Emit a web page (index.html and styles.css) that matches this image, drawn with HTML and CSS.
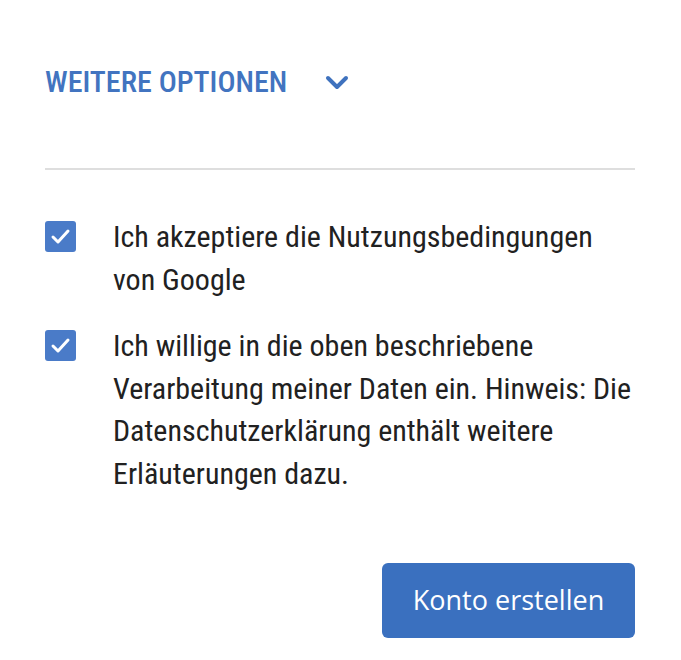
FILE: index.html
```html
<!DOCTYPE html>
<html lang="de">
<head>
<meta charset="UTF-8" />
<meta name="viewport" content="width=device-width, initial-scale=1" />
<title>Konto erstellen</title>
<link rel="stylesheet" href="styles.css">
</head>
<body>

<div class="panel">
  <div class="more">
    <span class="more-label">WEITERE OPTIONEN</span>
    <svg class="chevron" width="24" height="16" viewBox="0 0 24 16" aria-hidden="true">
      <path d="M3 3 L12 12 L21 3" fill="none" stroke="#3f72be" stroke-width="4" stroke-linecap="round" stroke-linejoin="round" />
    </svg>
  </div>

  <hr class="divider" />

  <div class="consent">
    <label class="check-row">
      <span class="box">
        <svg width="31" height="31" viewBox="0 0 31 31" aria-hidden="true">
          <path d="M8 16 L13 21 L23 10" fill="none" stroke="#fff" stroke-width="3" stroke-linecap="round" stroke-linejoin="round" />
        </svg>
      </span>
      <span class="check-text">Ich akzeptiere die Nutzungsbedingungen<br>von Google</span>
    </label>

    <label class="check-row">
      <span class="box">
        <svg width="31" height="31" viewBox="0 0 31 31" aria-hidden="true">
          <path d="M8 16 L13 21 L23 10" fill="none" stroke="#fff" stroke-width="3" stroke-linecap="round" stroke-linejoin="round" />
        </svg>
      </span>
      <span class="check-text">Ich willige in die oben beschriebene<br>Verarbeitung meiner Daten ein. Hinweis: Die<br>Datenschutzerklärung enthält weitere<br>Erläuterungen dazu.</span>
    </label>
  </div>

  <div class="actions">
    <button class="primary">Konto erstellen</button>
  </div>
</div>

</body>
</html>
```
FILE: styles.css
```css
/* Base */
body, html {
  margin: 0;
  padding: 0;
  background: #fff;
  font-family: Roboto, Arial, sans-serif;
  color: #212121;
}

.panel {
  width: 590px;
  padding: 64px 0 0 45px;
}

/* Weitere Optionen */
.more {
  display: flex;
  align-items: center;
  height: 36px;
  gap: 38px;
}
.more-label {
  font-size: 30px;
  font-weight: 500;
  font-stretch: 80%;
  line-height: 36px;
  color: #4274c0;
}
.chevron {
  display: block;
  margin-top: 2px;
}

.divider {
  border: 0;
  height: 2px;
  background: #dedede;
  margin: 68px 0 0 0;
}

/* Checkboxes */
.consent {
  display: flex;
  flex-direction: column;
  gap: 24px;
  margin-top: 46px;
}
.check-row {
  display: flex;
  align-items: flex-start;
  gap: 37px;
}
.box {
  flex: none;
  width: 31px;
  height: 31px;
  margin-top: 5px;
  border-radius: 3px;
  background: #4a7bc8;
}
.box svg {
  display: block;
}
.check-text {
  font-size: 30px;
  font-stretch: 80%;
  line-height: 42.5px;
}

/* Button */
.actions {
  display: flex;
  justify-content: flex-end;
  margin-top: 68px;
}
.primary {
  width: 253px;
  height: 75px;
  border: 0;
  border-radius: 6px;
  background: #3a70bf;
  color: #fff;
  font-family: "Open Sans", Arial, sans-serif;
  font-size: 27px;
  padding: 0 0 2px 0;
}
```
